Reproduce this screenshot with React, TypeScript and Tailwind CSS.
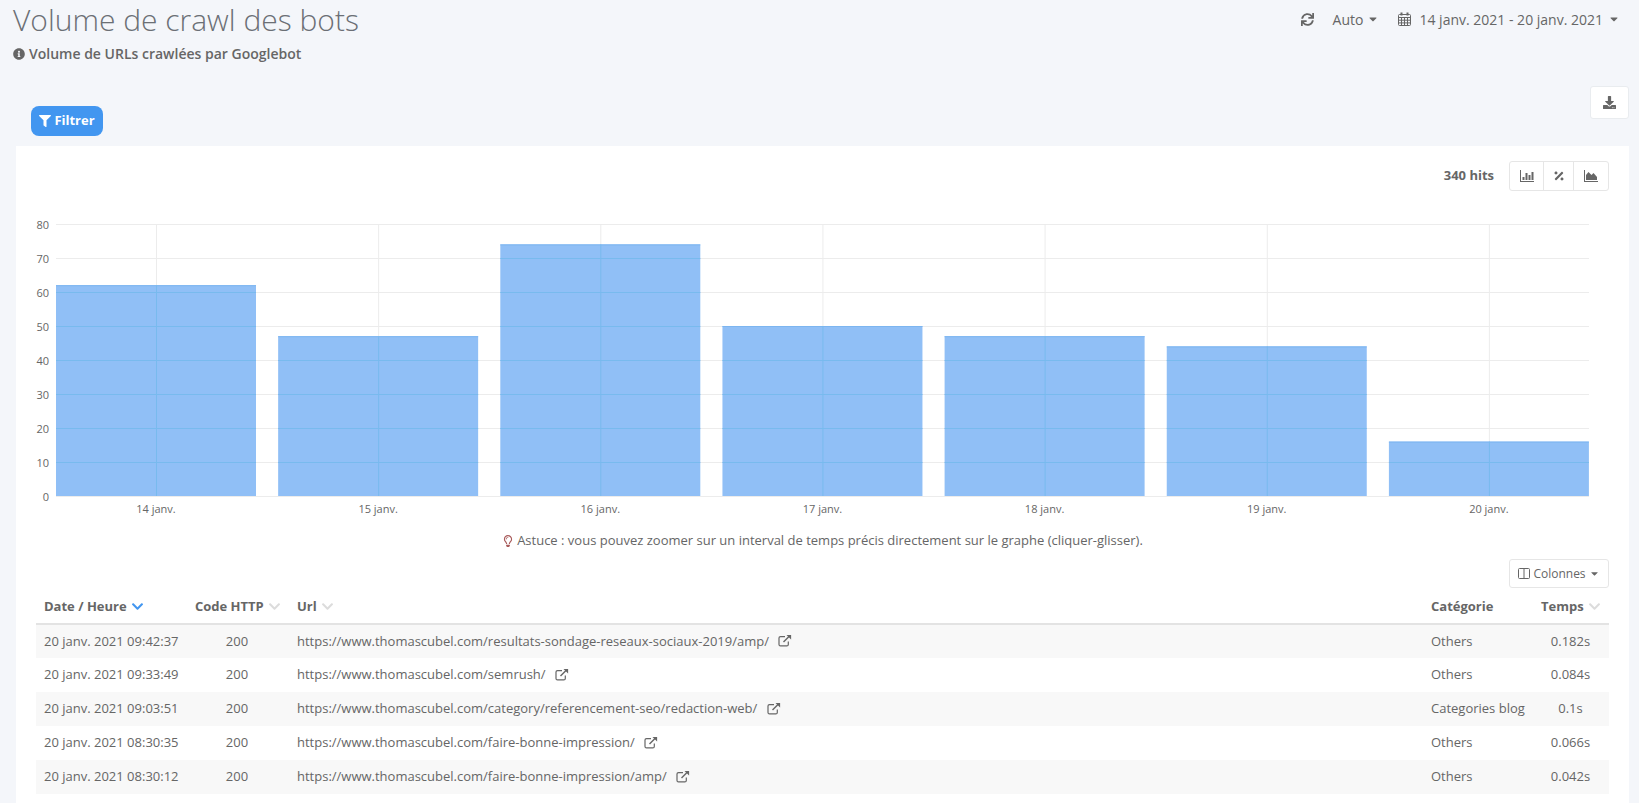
import { FaSync, FaInfoCircle, FaFilter, FaDownload, FaPercentage, FaRegLightbulb, FaCaretDown, FaChevronDown } from 'react-icons/fa'

const bars = [
  { label: '14 janv.', value: 62 },
  { label: '15 janv.', value: 47 },
  { label: '16 janv.', value: 74 },
  { label: '17 janv.', value: 50 },
  { label: '18 janv.', value: 47 },
  { label: '19 janv.', value: 44 },
  { label: '20 janv.', value: 16 },
]

const rows = [
  { date: '20 janv. 2021 09:42:37', url: 'https://www.thomascubel.com/resultats-sondage-reseaux-sociaux-2019/amp/', cat: 'Others', time: '0.182s' },
  { date: '20 janv. 2021 09:33:49', url: 'https://www.thomascubel.com/semrush/', cat: 'Others', time: '0.084s' },
  { date: '20 janv. 2021 09:03:51', url: 'https://www.thomascubel.com/category/referencement-seo/redaction-web/', cat: 'Categories blog', time: '0.1s' },
  { date: '20 janv. 2021 08:30:35', url: 'https://www.thomascubel.com/faire-bonne-impression/', cat: 'Others', time: '0.066s' },
  { date: '20 janv. 2021 08:30:12', url: 'https://www.thomascubel.com/faire-bonne-impression/amp/', cat: 'Others', time: '0.042s' },
]

const BASE = 281
const TOP = 9.5
const UNIT = 3.4
const STEP = 222.15

function Chart() {
  return (
    <svg width="1573" height="305" className="block" style={{ fontFamily: '"Open Sans", sans-serif' }}>
      {[0, 1, 2, 3, 4, 5, 6, 7, 8].map((i) => (
        <g key={i}>
          <line x1="20" x2="1553" y1={TOP + i * 34} y2={TOP + i * 34} stroke="#ececec" />
          <text x="13" y={TOP + i * 34 + 4} textAnchor="end" fontSize="11" fill="#666">{(8 - i) * 10}</text>
        </g>
      ))}
      {bars.map((b, i) => (
        <line key={b.label} x1={120.5 + i * STEP} x2={120.5 + i * STEP} y1={TOP} y2={BASE} stroke="#ececec" />
      ))}
      {bars.map((b, i) => {
        const x = 20 + i * STEP
        const h = b.value * UNIT
        const gridLines = [1, 2, 3, 4, 5, 6, 7].map((n) => BASE - n * 34).filter((y) => y > BASE - h)
        return (
          <g key={b.label}>
            <rect x={x} y={BASE - h} width="200" height={h} fill="#90bff6" />
            <line x1={x} x2={x + 200} y1={BASE - h + 0.5} y2={BASE - h + 0.5} stroke="#7cb5f0" />
            {gridLines.map((y) => (
              <line key={y} x1={x} x2={x + 200} y1={y + 0.5} y2={y + 0.5} stroke="#78baee" />
            ))}
            <line x1={x + 100.5} x2={x + 100.5} y1={BASE - h} y2={BASE} stroke="#78baee" />
            <text x={x + 100} y="298" textAnchor="middle" fontSize="11" fill="#666">{b.label}</text>
          </g>
        )
      })}
    </svg>
  )
}

function BarChartIcon() {
  return (
    <svg width="14" height="12" viewBox="0 0 14 12" fill="#666">
      <path d="M0 0h1v11h13v1H0z" />
      <path d="M2.500 7h2v3h-2zM5.500 3h2v7h-2zM8.500 5h2v5h-2zM11.500 2h2v8h-2z" />
    </svg>
  )
}

function AreaChartIcon() {
  return (
    <svg width="14" height="12" viewBox="0 0 14 12" fill="#666">
      <path d="M0 0h1v11h13v1H0z" />
      <path d="M2 10V5l2.500-3 3 3 2-2 3.500 4v3z" />
    </svg>
  )
}

function CalendarIcon() {
  return (
    <svg width="13" height="14" viewBox="0 0 13 14" fill="none" stroke="#666" strokeWidth="1">
      <rect x="0.500" y="2.500" width="12" height="11" rx="1" />
      <path d="M0.500 5.500h12M0.500 8.200h12M0.500 10.900h12M3.500 5.500v8M6.500 5.500v8M9.500 5.500v8" />
      <path d="M3.500 0.500v3M9.500 0.500v3" strokeWidth="2" />
    </svg>
  )
}

function ColumnsIcon() {
  return (
    <svg width="12" height="11" viewBox="0 0 12 11" fill="none" stroke="#666" strokeWidth="1">
      <rect x="0.500" y="0.500" width="11" height="10" rx="1" />
      <path d="M6 0.500v10" />
    </svg>
  )
}

function ExternalIcon() {
  return (
    <svg width="14" height="13" viewBox="0 0 14 13" fill="none" stroke="#666" strokeWidth="1.200" className="inline-block ml-[6px] -mt-[3px]">
      <path d="M7 2.600H2.500a1.500 1.500 0 0 0-1.500 1.500v6.300a1.500 1.500 0 0 0 1.500 1.500h6.300a1.500 1.500 0 0 0 1.500-1.500V7.500" />
      <path d="M5.500 8 12 1.500" strokeWidth="1.500" />
      <path d="M8.500.900h4.600v4.600z" fill="#666" stroke="none" />
    </svg>
  )
}

function SortIcon({ active }: { active?: boolean }) {
  return <FaChevronDown className={`inline-block ml-[4px] -mt-[2px] text-[13px] ${active ? 'text-[#4296f0]' : 'text-[#dcdcdc]'}`} />
}

export default function App() {
  return (
    <div className="h-[803px] overflow-hidden bg-[#f4f6fa] font-['Open_Sans',sans-serif] text-[13px] text-[#666]">
      {/* Top: title & date range */}
      <div className="flex justify-between h-[86px] pl-[13px] pr-[19px]">
        <div>
          <h1 className="text-[30px] leading-[40px] font-light text-[#6b6f75]">Volume de crawl des bots</h1>
          <div className="mt-[5px] flex items-center gap-[4px] font-semibold text-[14px] leading-[18px]">
            <FaInfoCircle className="text-[12px]" /> Volume de URLs crawlées par Googlebot
          </div>
        </div>
        <div className="flex items-center h-[38px] text-[14px]">
          <FaSync className="text-[13px] mr-[19px]" />
          <span className="flex items-center gap-[4px] mr-[19px]">Auto <FaCaretDown className="text-[12px]" /></span>
          <span className="flex items-center gap-[8px]">
            <CalendarIcon /> 14 janv. 2021 - 20 janv. 2021 <FaCaretDown className="text-[12px] -ml-[3px]" />
          </span>
        </div>
      </div>

      {/* Filter & export */}
      <div className="flex justify-between h-[60px] pl-[31px] pr-[10px]">
        <button className="mt-[20px] h-[30px] w-[72px] rounded-[8px] bg-[#4296f0] text-white font-bold flex items-center justify-center gap-[3px]">
          <FaFilter className="text-[12px]" /> Filtrer
        </button>
        <button className="h-[33px] w-[39px] bg-white border border-[#e9ecef] rounded-[3px] flex items-center justify-center">
          <FaDownload className="text-[13px]" />
        </button>
      </div>

      {/* Panel */}
      <div className="ml-[16px] mr-[10px] h-[657px] bg-white px-[20px] pt-[15px]">
        <div className="flex justify-end items-center gap-[15px] h-[30px]">
          <span className="font-bold">340 hits</span>
          <div className="flex h-[30px] w-[100px] border border-[#e6e6e6] rounded-[3px]">
            <button className="w-[34px] flex items-center justify-center border-r border-[#e6e6e6]"><BarChartIcon /></button>
            <button className="w-[30px] flex items-center justify-center border-r border-[#e6e6e6]"><FaPercentage className="text-[12px]" /></button>
            <button className="flex-1 flex items-center justify-center"><AreaChartIcon /></button>
          </div>
        </div>

        <div className="mt-[24px]">
          <Chart />
        </div>

        <div className="mt-[11px] flex items-center justify-center gap-[3px] h-[20px] text-[13px]">
          <FaRegLightbulb className="text-[12px] text-[#a85a5a]" />
          Astuce : vous pouvez zoomer sur un interval de temps précis directement sur le graphe (cliquer-glisser).
        </div>

        <div className="mt-[8px] flex justify-end">
          <button className="h-[29px] w-[100px] border border-[#e6e6e6] rounded-[3px] flex items-center justify-center gap-[3px] text-[12px]">
            <ColumnsIcon /> Colonnes <FaCaretDown className="text-[11px]" />
          </button>
        </div>

        <table className="w-full table-fixed text-[13px] mt-[3px]">
          <colgroup>
            <col className="w-[150px]" />
            <col className="w-[102px]" />
            <col />
            <col className="w-[110px]" />
            <col className="w-[77px]" />
          </colgroup>
          <thead>
            <tr className="h-[33px] border-b-2 border-[#e3e3e3] text-left font-bold">
              <th className="pl-[8px] pr-[4px] whitespace-nowrap">Date / Heure<SortIcon active /></th>
              <th className="px-[9px] whitespace-nowrap">Code HTTP<SortIcon /></th>
              <th className="px-[9px]">Url<SortIcon /></th>
              <th className="px-[9px]">Catégorie</th>
              <th className="px-[9px] whitespace-nowrap">Temps<SortIcon /></th>
            </tr>
          </thead>
          <tbody>
            {rows.map((r) => (
              <tr key={r.date} className="h-[34px] odd:bg-[#f8f8f8]">
                <td className="pl-[8px] pr-[4px] whitespace-nowrap">{r.date}</td>
                <td className="px-[9px] text-center">200</td>
                <td className="px-[9px]">{r.url} <ExternalIcon /></td>
                <td className="px-[9px] whitespace-nowrap">{r.cat}</td>
                <td className="px-[9px] text-center">{r.time}</td>
              </tr>
            ))}
          </tbody>
        </table>
      </div>
    </div>
  )
}
